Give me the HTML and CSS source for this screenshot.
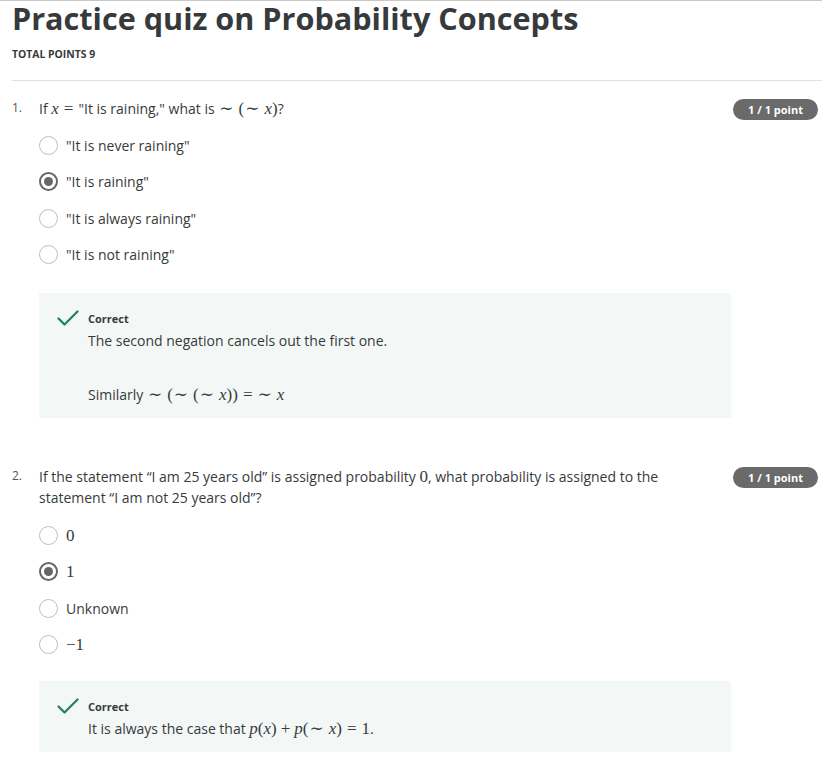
FILE: index.html
```html
<!DOCTYPE html>
<html>
<head>
<meta charset="utf-8">
<link rel="stylesheet" href="styles.css">
</head>
<body>
<div class="page">
  <header class="header">
    <h1 class="title">Practice quiz on Probability Concepts</h1>
    <div class="total">TOTAL POINTS 9</div>
  </header>
  <hr class="rule">

  <section class="question q1">
    <div class="q-head">
      <span class="q-num">1.</span>
      <div class="q-text">If <span class="m"><i>x</i><span class="rel">=</span></span>"It is raining," what is <span class="m"><span class="op">∼</span>(<span class="op">∼</span><i>x</i>)</span>?</div>
      <span class="badge">1 / 1 point</span>
    </div>
    <div class="options">
      <div class="opt"><span class="radio"></span><span class="opt-text">"It is never raining"</span></div>
      <div class="opt"><span class="radio checked"></span><span class="opt-text">"It is raining"</span></div>
      <div class="opt"><span class="radio"></span><span class="opt-text">"It is always raining"</span></div>
      <div class="opt"><span class="radio"></span><span class="opt-text">"It is not raining"</span></div>
    </div>
    <div class="feedback">
      <svg class="check" width="22" height="16" viewBox="0 0 22 16"><path d="M1.5 8.5 L7.5 14.5 L20.5 1.5" fill="none" stroke="#1f8354" stroke-width="2.2" stroke-linecap="round" stroke-linejoin="round"/></svg>
      <div class="fb-body">
        <div class="fb-label">Correct</div>
        <p class="fb-text">The second negation cancels out the first one.</p>
        <p class="fb-text gap">Similarly <span class="m"><span class="op">∼</span>(<span class="op">∼</span>(<span class="op">∼</span><i>x</i>))<span class="rel">=</span><span class="op tight">∼</span><i>x</i></span></p>
      </div>
    </div>
  </section>

  <section class="question q2">
    <div class="q-head">
      <span class="q-num">2.</span>
      <div class="q-text">If the statement “I am 25 years old” is assigned probability <span class="m">0</span>, what probability is assigned to the statement “I am not 25 years old”?</div>
      <span class="badge">1 / 1 point</span>
    </div>
    <div class="options">
      <div class="opt"><span class="radio"></span><span class="opt-text m">0</span></div>
      <div class="opt"><span class="radio checked"></span><span class="opt-text m">1</span></div>
      <div class="opt"><span class="radio"></span><span class="opt-text">Unknown</span></div>
      <div class="opt"><span class="radio"></span><span class="opt-text m">−1</span></div>
    </div>
    <div class="feedback">
      <svg class="check" width="22" height="16" viewBox="0 0 22 16"><path d="M1.5 8.5 L7.5 14.5 L20.5 1.5" fill="none" stroke="#1f8354" stroke-width="2.2" stroke-linecap="round" stroke-linejoin="round"/></svg>
      <div class="fb-body">
        <div class="fb-label">Correct</div>
        <p class="fb-text">It is always the case that <span class="m"><i>p</i>(<i>x</i>)<span class="bin">+</span><i>p</i>(<span class="op">∼</span><i>x</i>)<span class="rel">=</span>1</span>.</p>
      </div>
    </div>
  </section>
</div>
</body>
</html>
```

FILE: styles.css
```css
html, body {
  margin: 0;
  padding: 0;
  background: #ffffff;
}
body {
  font-family: "Open Sans", "Liberation Sans", sans-serif;
  color: #373a3c;
}
.page {
  border-top: 1px solid #c8c8c8;
}
.header {
  padding: 0 12px;
}
.title {
  margin: 0;
  font-size: 30.6px;
  line-height: 36px;
  margin-top: -1px;
  font-weight: 700;
  color: #373a3c;
}
.total {
  margin-top: 11px;
  font-size: 10.4px;
  line-height: 14px;
  font-weight: 700;
  color: #373a3c;
}
.rule {
  margin: 19px 0 0 12px;
  border: 0;
  border-top: 1px solid #e1e1e1;
  height: 0;
}
.question {
  padding: 0 4px 0 12px;
}
.q1 {
  margin-top: 17px;
}
.q2 {
  margin-top: 48px;
}
.q-head {
  display: flex;
  align-items: flex-start;
}
.q-num {
  width: 27px;
  flex: none;
  font-size: 12px;
  line-height: 19px;
  color: #555;
}
.q-text {
  flex: 1;
  font-size: 14px;
  line-height: 21px;
  color: #373a3c;
  padding-right: 20px;
}
.badge {
  flex: none;
  margin-top: 1px;
  width: 85px;
  height: 21px;
  border-radius: 11px;
  background: #6a6a6a;
  color: #fff;
  font-size: 11px;
  font-weight: 700;
  line-height: 21px;
  text-align: center;
}
.m {
  font-family: "Liberation Serif", "DejaVu Serif", serif;
  font-size: 17px;
  line-height: 1;
}
.m i {
  font-style: italic;
}
.rel {
  margin: 0 5px;
}
.bin {
  margin: 0 4px;
}
.op {
  margin: 0 5px 0 1px;
}
.op.tight {
  margin-left: 0;
}
.options {
  margin: 7px 0 0 27px;
}
.q2 .options {
  margin-top: 9px;
}
.opt {
  display: flex;
  align-items: center;
  height: 36.5px;
}
.radio {
  flex: none;
  box-sizing: border-box;
  width: 19px;
  height: 19px;
  border-radius: 50%;
  border: 1.5px solid #bdbdbd;
  margin-right: 8px;
  position: relative;
}
.radio.checked {
  border: 2px solid #666;
}
.radio.checked::after {
  content: "";
  position: absolute;
  left: 50%;
  top: 50%;
  width: 9px;
  height: 9px;
  margin: -4.5px 0 0 -4.5px;
  border-radius: 50%;
  background: #666;
}
.opt-text {
  font-size: 14px;
  color: #373a3c;
}
.opt-text.m {
  font-size: 17px;
}
.feedback {
  margin: 20px 87px 0 27px;
  background: #f3f8f7;
  padding: 13.5px 18px 13.5px 18px;
  display: flex;
  align-items: flex-start;
}
.q2 .feedback {
  margin-top: 18px;
}
.check {
  flex: none;
  margin-top: 3px;
  margin-right: 9px;
}
.fb-body {
  flex: 1;
}
.fb-label {
  font-size: 11px;
  font-weight: 700;
  line-height: 23px;
  color: #373a3c;
}
.fb-text {
  margin: 0;
  font-size: 14px;
  line-height: 21px;
  color: #373a3c;
}
.fb-text.gap {
  margin-top: 33px;
}
```
